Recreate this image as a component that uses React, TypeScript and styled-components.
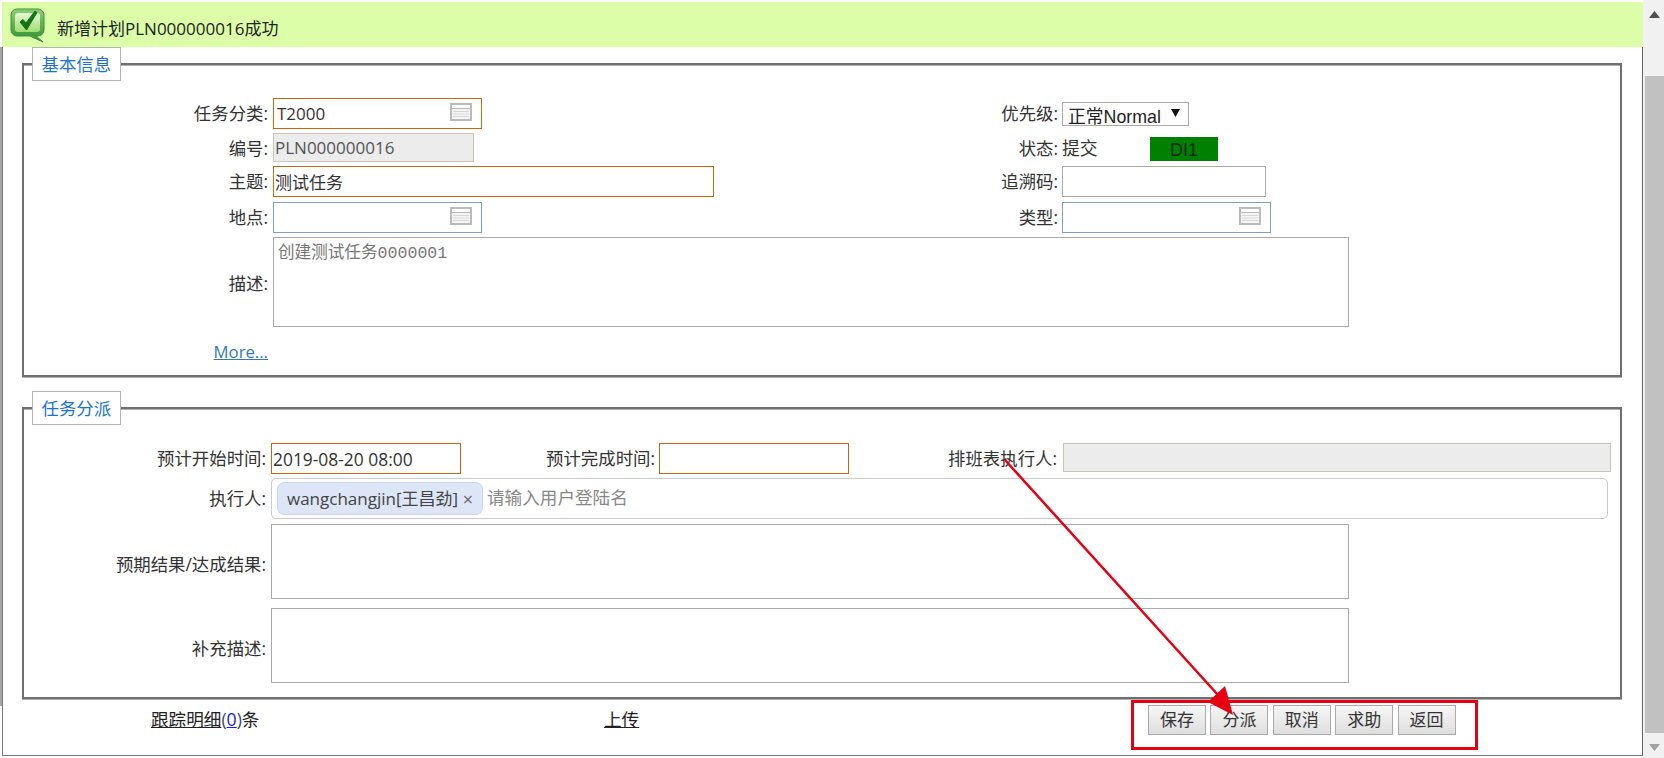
import React from "react";
import styled, { createGlobalStyle } from "styled-components";

const Global = createGlobalStyle`
  html, body { margin: 0; padding: 0; background: #fff; overflow: hidden; }
  * { box-sizing: border-box; }
  body { font: 17px/24px "Open Sans", "Noto Sans CJK SC", sans-serif; color: #333; }
`;

const Page = styled.div`
  position: relative;
  display: flex;
  width: 1664px;
  height: 758px;
  overflow: hidden;
`;
const Gutter = styled.div`
  width: 2px;
  height: 659px;
  margin-top: 47px;
  background: #a8a8a8;
`;
const Main = styled.div`
  width: 1641px;
  height: 756px;
  padding-top: 2px;
  display: flex;
  flex-direction: column;
`;
const Banner = styled.div`
  flex: none;
  height: 45px;
  background: #dcfea8;
  display: flex;
  align-items: flex-start;
  padding: 6px 0 0 8px;
  color: #222;
`;
const BannerText = styled.span`
  margin: 9px 0 0 11px;
  line-height: 24px;
`;
const Frame = styled.div`
  flex: 1;
  min-height: 0;
  border-left: 1px solid #777;
  border-right: 1px solid #666;
  border-bottom: 1px solid #777;
  padding-left: 19px;
  padding-right: 20px;
`;
const Section = styled.fieldset<{ $gap?: number }>`
  margin: ${(p) => p.$gap ?? 0}px 0 0;
  padding: 0;
  min-width: 0;
  border: 2px solid #6f6f6f;
  box-shadow: inset 0 1px 0 #b0b0b0, 0 1px 0 #b0b0b0;
`;
const Legend = styled.legend`
  margin-left: 8px;
  padding: 0 8.500px;
  height: 34px;
  line-height: 33px;
  background: #fff;
  border: 1px solid #b4b4b4;
  color: #1a73d2;
  font-size: 17.400px;
`;
const InfoGrid = styled.div`
  display: grid;
  grid-template-columns: 249px 700px 89px 558px;
  grid-template-rows: 35px 33px 36px 35px 90px 48px;
  padding-top: 17px;
`;
const AssignGrid = styled.div`
  display: grid;
  grid-template-columns: 247px 189px 199px 190px 214px 548px;
  grid-template-rows: 35px 46px 84px 75px;
  padding: 18px 0 14px;
  font-size: 17.400px;
`;
const Label = styled.label<{ $gap?: number }>`
  height: 31px;
  line-height: 31px;
  padding-right: ${(p) => p.$gap ?? 5}px;
  text-align: right;
  font-size: 17.400px;
  white-space: nowrap;
`;
const AreaLabel = styled(Label)<{ $top: number }>`
  height: 30px;
  line-height: 30px;
  margin-top: ${(p) => p.$top}px;
`;
const TagLabel = styled(Label)`
  height: 40px;
  line-height: 40px;
`;
const TextField = styled.input<{ $w: number; $h?: number; $tone: "orange" | "plain" }>`
  width: ${(p) => p.$w}px;
  height: ${(p) => p.$h ?? 31}px;
  padding: 0 1px;
  border: 1px solid ${(p) => (p.$tone === "orange" ? "#c9660f" : "#a9a9a9")};
  background: #fff;
  outline: none;
  font: inherit;
  color: #333;
`;
const DisabledField = styled.input<{ $w: number }>`
  width: ${(p) => p.$w}px;
  height: 29px;
  padding: 0 1px;
  border: 1px solid #c9c6b8;
  background: #ececec;
  outline: none;
  font: inherit;
  color: #555;
`;
const LookupBox = styled.div<{ $tone: "orange" | "blue" }>`
  width: 209px;
  height: 31px;
  display: flex;
  align-items: center;
  justify-content: space-between;
  padding: 0 9.500px 0 3px;
  border: 1px solid ${(p) => (p.$tone === "orange" ? "#c9660f" : "#7da1c4")};
  color: #333;
`;
const LookupGlyph = styled.svg`
  flex: none;
  margin-top: -3px;
`;
const SelectBox = styled.div`
  margin-top: 4px;
  width: 127px;
  height: 24px;
  display: flex;
  align-items: flex-start;
  justify-content: space-between;
  padding: 2px 8px 0 5px;
  border: 1px solid #a9a9a9;
  overflow: hidden;
  font-family: "Liberation Sans", "Noto Sans CJK SC", sans-serif;
  font-size: 17.800px;
  line-height: 24px;
  color: #222;
`;
const CaretGlyph = styled.svg`
  flex: none;
  margin-top: 4px;
`;
const StatusCell = styled.div`
  display: flex;
  align-items: flex-start;
`;
const StatusText = styled.span`
  width: 88px;
  height: 30px;
  line-height: 30px;
  font-size: 17.800px;
`;
const StatusBadge = styled.span`
  margin-top: 4px;
  width: 68px;
  height: 24px;
  background: #008000;
  color: #0a2a10;
  text-align: center;
  line-height: 26px;
  font-size: 18px;
  font-family: "Liberation Sans", sans-serif;
`;
const Area = styled.textarea<{ $w: number; $h: number; $span: string }>`
  grid-column: ${(p) => p.$span};
  width: ${(p) => p.$w}px;
  height: ${(p) => p.$h}px;
  padding: 6px 4px;
  border: 1px solid #a9a9a9;
  outline: none;
  resize: none;
  font: 16.600px/20px "Liberation Mono", "Noto Sans CJK SC", monospace;
  color: #777;
  background: #fff;
`;
const MoreLink = styled.a`
  padding: 13px 5px 0 0;
  text-align: right;
  font-size: 16.700px;
  color: #337ab7;
  text-decoration: underline;
`;
const TagBox = styled.div`
  grid-column: 2 / 7;
  width: 1337px;
  height: 41px;
  display: flex;
  align-items: center;
  padding: 0 5px;
  border: 1px solid #ccc;
  border-radius: 5px;
`;
const Tag = styled.span`
  width: 206px;
  height: 33px;
  display: flex;
  align-items: center;
  justify-content: space-between;
  padding: 0 9px;
  background: #dde6f6;
  border: 1px solid #c9d7f1;
  border-radius: 7px;
  color: #444;
  font-size: 17px;
  white-space: nowrap;
`;
const TagRemove = styled.span`
  color: #666;
  font-size: 18px;
`;
const TagHint = styled.span`
  margin: -4px 0 0 4px;
  color: #888;
  font-size: 17.600px;
`;
const Footer = styled.div`
  display: grid;
  grid-template-columns: 453px 544px auto;
  align-items: center;
  padding: 6px 0 0 129px;
`;
const FooterText = styled.span`
  margin-top: -2px;
  color: #222;
  font-size: 17.600px;
  white-space: nowrap;
`;
const Linked = styled.a`
  text-decoration: underline;
  color: inherit;
`;
const Count = styled.a`
  text-decoration: underline;
  color: #1a1ae0;
`;
const Paren = styled.span`
  color: #446;
`;
const Actions = styled.div`
  display: flex;
  gap: 4.400px;
`;
const ActionButton = styled.button`
  width: 58px;
  height: 30px;
  padding: 0;
  border: 1px solid #aaa;
  background: linear-gradient(#f6f6f6, #dedede);
  font: inherit;
  color: #333;
`;
const Scrollbar = styled.div`
  position: relative;
  width: 21px;
  height: 758px;
  background: #f1f1f1;
  display: flex;
  flex-direction: column;
  align-items: flex-end;
`;
const ScrollButton = styled.div`
  flex: none;
  width: 19px;
  height: 28px;
  display: flex;
  align-items: center;
  justify-content: center;
`;
const ScrollGap = styled.div`
  flex: none;
  height: 48px;
`;
const Thumb = styled.div`
  flex: none;
  width: 19px;
  height: 657px;
  background: #c1c1c1;
`;
const Annotation = styled.svg`
  position: absolute;
  left: 0;
  top: 0;
  pointer-events: none;
`;

const SuccessIcon = () => (
  <svg width="36" height="35" viewBox="0 0 36 35">
    <defs>
      <linearGradient id="bubble" x1="0" y1="0" x2="0" y2="1">
        <stop offset="0" stopColor="#8fce74" />
        <stop offset="1" stopColor="#2f8f2e" />
      </linearGradient>
      <linearGradient id="panel" x1="0" y1="0" x2="0" y2="1">
        <stop offset="0" stopColor="#e6f7d6" />
        <stop offset="1" stopColor="#9fdc72" />
      </linearGradient>
    </defs>
    <path
      d="M7 1h21a6 6 0 0 1 6 6v15a6 6 0 0 1-6 6h-2l7 6-13-6H7a6 6 0 0 1-6-6V7a6 6 0 0 1 6-6z"
      fill="url(#bubble)"
      stroke="#3f8f3a"
    />
    <rect x="5" y="5" width="25" height="19" rx="3" fill="url(#panel)" />
    <path d="M10 14l3-2.500 3 3.500L25 3l2 1.500L16.500 22z" fill="#127412" stroke="#127412" strokeLinejoin="round" />
  </svg>
);

const WindowIcon = () => (
  <LookupGlyph width="22" height="18" viewBox="0 0 22 18">
    <rect x="1" y="1" width="20" height="16" fill="#f4f4f4" stroke="#bbb" strokeWidth="2" />
    <rect x="2" y="2" width="18" height="3" fill="#fff" />
    <path d="M1 5.500h20" stroke="#bbb" />
    <path d="M3 8.500h16M3 11h16M3 13.500h16" stroke="#d8d8d8" />
  </LookupGlyph>
);

const Caret = () => (
  <CaretGlyph width="9" height="8" viewBox="0 0 9 8">
    <path d="M0 0h9L4.500 8z" fill="#111" />
  </CaretGlyph>
);

const Triangle = ({ down }: { down?: boolean }) => (
  <svg width="11" height="7" viewBox="0 0 11 7">
    <path d={down ? "M0 0h11L5.500 7z" : "M0 7h11L5.500 0z"} fill={down ? "#a3a3a3" : "#505050"} />
  </svg>
);

const noop = () => undefined;

export default function App() {
  return (
    <Page>
      <Global />
      <Gutter />
      <Main>
        <Banner>
          <SuccessIcon />
          <BannerText>新增计划PLN000000016成功</BannerText>
        </Banner>
        <Frame>
          <Section>
            <Legend>基本信息</Legend>
            <InfoGrid>
              <Label>任务分类:</Label>
              <LookupBox $tone="orange">
                T2000
                <WindowIcon />
              </LookupBox>
              <Label $gap={4}>优先级:</Label>
              <SelectBox>
                正常Normal
                <Caret />
              </SelectBox>

              <Label>编号:</Label>
              <DisabledField $w={201} value="PLN000000016" readOnly onChange={noop} />
              <Label $gap={4}>状态:</Label>
              <StatusCell>
                <StatusText>提交</StatusText>
                <StatusBadge>DI1</StatusBadge>
              </StatusCell>

              <Label>主题:</Label>
              <TextField $w={441} $tone="orange" value="测试任务" readOnly onChange={noop} />
              <Label $gap={4}>追溯码:</Label>
              <TextField $w={204} $tone="plain" />

              <Label>地点:</Label>
              <LookupBox $tone="blue">
                <span />
                <WindowIcon />
              </LookupBox>
              <Label $gap={4}>类型:</Label>
              <LookupBox $tone="blue">
                <span />
                <WindowIcon />
              </LookupBox>

              <AreaLabel $top={31}>描述:</AreaLabel>
              <Area $w={1076} $h={90} $span="2 / 5" value="创建测试任务0000001" readOnly onChange={noop} />

              <MoreLink>More...</MoreLink>
            </InfoGrid>
          </Section>
          <Section $gap={14}>
            <Legend>任务分派</Legend>
            <AssignGrid>
              <Label>预计开始时间:</Label>
              <TextField $w={190} $tone="orange" value="2019-08-20 08:00" readOnly onChange={noop} />
              <Label $gap={4}>预计完成时间:</Label>
              <TextField $w={190} $tone="orange" />
              <Label $gap={6}>排班表执行人:</Label>
              <DisabledField $w={548} />

              <TagLabel>执行人:</TagLabel>
              <TagBox>
                <Tag>
                  wangchangjin[王昌劲]
                  <TagRemove>×</TagRemove>
                </Tag>
                <TagHint>请输入用户登陆名</TagHint>
              </TagBox>

              <AreaLabel $top={25}>预期结果/达成结果:</AreaLabel>
              <Area $w={1078} $h={75} $span="2 / 7" />

              <AreaLabel $top={25}>补充描述:</AreaLabel>
              <Area $w={1078} $h={75} $span="2 / 7" />
            </AssignGrid>
          </Section>
          <Footer>
            <FooterText>
              <Linked>跟踪明细</Linked>
              <Paren>(</Paren>
              <Count>0</Count>
              <Paren>)</Paren>条
            </FooterText>
            <FooterText>
              <Linked>上传</Linked>
            </FooterText>
            <Actions>
              {["保存", "分派", "取消", "求助", "返回"].map((t) => (
                <ActionButton key={t}>{t}</ActionButton>
              ))}
            </Actions>
          </Footer>
        </Frame>
      </Main>
      <Scrollbar>
        <ScrollButton>
          <Triangle />
        </ScrollButton>
        <ScrollGap />
        <Thumb />
        <ScrollButton>
          <Triangle down />
        </ScrollButton>
      </Scrollbar>
      <Annotation width="1664" height="758" viewBox="0 0 1664 758">
        <rect x="1132.500" y="701.500" width="344" height="47" fill="none" stroke="#e60012" strokeWidth="3" />
        <path d="M1005 460L1218 695" stroke="#e60012" strokeWidth="2.500" />
        <path d="M1233 715L1225 686L1208 702z" fill="#e60012" />
      </Annotation>
    </Page>
  );
}
